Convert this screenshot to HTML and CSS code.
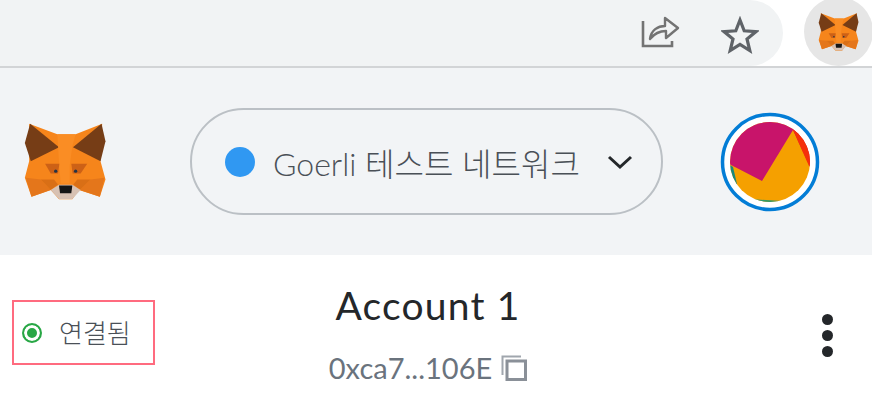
FILE: index.html
```html
<!DOCTYPE html>
<html lang="ko">
<head>
    <meta charset="UTF-8">
    <meta name="viewport" content="width=device-width, initial-scale=1.0">
    <title>MetaMask</title>
    <link rel="stylesheet" href="styles.css">
</head>
<body>
    <svg class="defs" width="0" height="0">
        <symbol id="fox" viewBox="70 70 246 232">
            <polygon fill="#f6851b" points="85,72 170,104 225,104 305,72 300,185 315,240 298,292 235,272 215,300 175,300 150,272 92,292 72,235 85,185"/>
            <polygon fill="#763d16" points="88,72 175,143 90,185 72,130"/>
            <polygon fill="#763d16" points="303,72 217,143 300,185 315,125"/>
            <polygon fill="#fa8d24" points="170,104 225,104 215,140 207,200 207,252 180,252 175,190"/>
            <polygon fill="#e4761b" points="75,235 120,240 150,272 92,292"/>
            <polygon fill="#e4761b" points="312,235 270,240 238,272 298,292"/>
            <polygon fill="#d96f16" points="120,240 160,240 172,255 150,272"/>
            <polygon fill="#d96f16" points="270,240 230,240 218,255 238,272"/>
            <polygon fill="#cd6116" points="133,193 176,193 172,222 150,222"/>
            <polygon fill="#cd6116" points="260,193 212,193 216,222 240,222"/>
            <circle fill="#233447" cx="165" cy="215" r="5"/>
            <circle fill="#233447" cx="225" cy="215" r="5"/>
            <polygon fill="#d7c1b3" points="150,272 175,256 215,256 240,272 215,299 175,299"/>
            <polygon fill="#161616" points="175,258 215,258 212,282 178,282"/>
        </symbol>
    </svg>

    <div class="toolbar">
        <div class="address-bar">
            <svg class="share-icon" width="42" height="40" viewBox="0 0 42 40">
                <path d="M3 6V31H32V26" fill="none" stroke="#737373" stroke-width="2.6"/>
                <path d="M10 24C11 15 18 11 25 11V3L38 13L26 23V16C19 16 14 19 10 24Z" fill="none" stroke="#737373" stroke-width="2.4" stroke-linejoin="round"/>
            </svg>
            <svg class="star-icon" width="38" height="38" viewBox="0 0 38 38">
                <polygon points="19,4 23.200,14.800 35,15.600 26,23 28.800,34.500 19,28.400 9.200,34.500 12,23 3,15.600 14.800,14.800" fill="none" stroke="#5f6368" stroke-width="3.200" stroke-linejoin="miter"/>
            </svg>
        </div>
        <div class="ext-button">
            <svg class="ext-fox" width="43" height="38"><use href="#fox"/></svg>
        </div>
    </div>

    <header class="app-header">
        <svg class="logo" width="82" height="77"><use href="#fox"/></svg>
        <div class="network-pill">
            <span class="network-dot"></span>
            <span class="network-name">Goerli 테스트 네트워크</span>
            <svg class="chevron" width="26" height="16" viewBox="0 0 26 16">
                <path d="M2 3L13 13L24 3" fill="none" stroke="#24272a" stroke-width="3"/>
            </svg>
        </div>
        <svg class="avatar" width="100" height="100" viewBox="0 0 100 100">
            <defs>
                <clipPath id="avatarClip"><circle cx="50" cy="50" r="40"/></clipPath>
            </defs>
            <circle cx="50" cy="50" r="47.500" fill="#fff" stroke="#037dd6" stroke-width="3.500"/>
            <g clip-path="url(#avatarClip)">
                <rect width="100" height="100" fill="#f5a000"/>
                <polygon points="0,0 100,0 100,60 90,55 73,18 42,69 13,54 0,48" fill="#c8146a"/>
                <polygon points="73,18 100,0 100,60 89,54" fill="#f5300a"/>
                <polygon points="0,46 13,55 17,72 0,72" fill="#18877d"/>
                <polygon points="30,87 70,89.500 60,100 30,100" fill="#2f9a6a"/>
            </g>
        </svg>
    </header>

    <main class="account-row">
        <div class="status-box">
            <span class="status-dot"></span>
            <span class="status-text">연결됨</span>
        </div>
        <div class="account-info">
            <div class="account-name">Account 1</div>
            <div class="account-address">
                <span>0xca7...106E</span>
                <svg width="26" height="26" viewBox="0 0 26 26">
                    <path d="M1.500 20V1.500H20" fill="none" stroke="#a0a6ad" stroke-width="2"/>
                    <rect x="6" y="6" width="18.500" height="18.500" fill="none" stroke="#8a9098" stroke-width="3"/>
                </svg>
            </div>
        </div>
        <div class="kebab">
            <span></span><span></span><span></span>
        </div>
    </main>
</body>
</html>
```

FILE: styles.css
```css
* {
    box-sizing: border-box;
}
html, body {
    margin: 0;
    height: 100%;
    overflow: hidden;
}
body {
    background: #fff;
    font-family: "Lato", "Noto Sans CJK KR", sans-serif;
}
.defs {
    display: block;
    height: 0;
}

.toolbar {
    display: flex;
    height: 66px;
}
.address-bar {
    width: 783px;
    background: #f1f3f4;
    border-radius: 0 33px 33px 0;
    display: flex;
    align-items: center;
    justify-content: flex-end;
    padding: 3px 24px 0 0;
    gap: 39px;
}
.share-icon, .star-icon {
    filter: blur(0.4px);
}
.ext-button {
    width: 69px;
    height: 69px;
    margin: -3px -1px 0 21px;
    flex-shrink: 0;
    border-radius: 50%;
    background: #e6e6e6;
    display: flex;
    align-items: center;
    justify-content: center;
}
.ext-fox {
    filter: blur(0.5px);
}

.app-header {
    height: 189px;
    background: #f2f4f6;
    border-top: 2px solid #d2d4d6;
    display: flex;
    align-items: center;
    padding-left: 24px;
}
.logo {
    flex-shrink: 0;
}
.network-pill {
    width: 473px;
    height: 107px;
    margin-left: 84px;
    border: 2px solid #bbc0c5;
    border-radius: 54px;
    display: flex;
    align-items: center;
    padding-left: 33px;
}
.network-dot {
    width: 30px;
    height: 30px;
    border-radius: 50%;
    background: #3098f2;
    flex-shrink: 0;
}
.network-name {
    margin-left: 18px;
    font-size: 32px;
    font-weight: 300;
    color: #4a5057;
    white-space: nowrap;
}
.chevron {
    margin-left: 27px;
    flex-shrink: 0;
}
.avatar {
    margin-left: 57px;
    flex-shrink: 0;
}

.account-row {
    display: grid;
    grid-template-columns: 143px 546px 1fr;
    align-items: start;
    padding-left: 12px;
}
.status-box {
    margin-top: 45px;
    height: 65px;
    border: 2px solid #ff6b7f;
    display: flex;
    align-items: center;
    padding-left: 8px;
}
.status-dot {
    width: 20px;
    height: 20px;
    border-radius: 50%;
    border: 2px solid #28a745;
    background: #28a745;
    box-shadow: inset 0 0 0 3px #fff;
}
.status-text {
    margin: -3px 0 0 17px;
    font-size: 26px;
    font-weight: 300;
    color: #4a5057;
}
.account-info {
    padding-top: 26px;
    display: flex;
    flex-direction: column;
    align-items: center;
}
.account-name {
    font-size: 39px;
    line-height: 48px;
    letter-spacing: 1.2px;
    color: #24272a;
}
.account-address {
    margin-top: 21px;
    display: flex;
    align-items: center;
    gap: 9px;
    font-size: 29px;
    line-height: 36px;
    color: #6a737d;
}
.kebab {
    margin: 59px 0 0 121px;
    display: flex;
    flex-direction: column;
    gap: 5px;
    width: 11px;
}
.kebab span {
    width: 11px;
    height: 11px;
    border-radius: 50%;
    background: #24272a;
}
```
